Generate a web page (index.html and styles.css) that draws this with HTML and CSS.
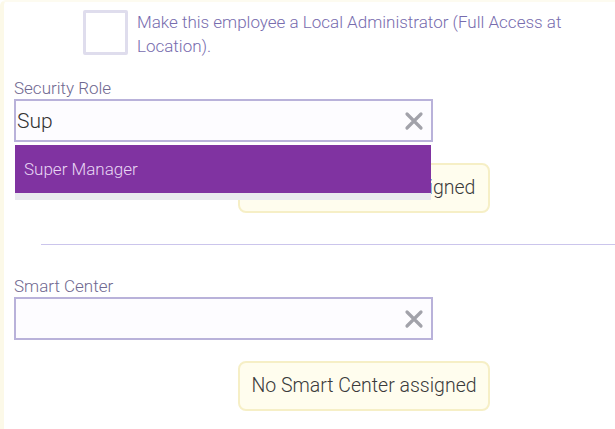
FILE: index.html
```html
<!DOCTYPE html>
<html lang="en">
<head>
  <meta charset="UTF-8">
  <meta name="viewport" content="width=device-width, initial-scale=1.0">
  <title>Employee Access</title>
  <link rel="stylesheet" href="styles.css">
</head>
<body>

<div class="panel">
  <div class="admin-row">
    <div class="checkbox"></div>
    <p class="admin-text">Make this employee a Local Administrator (Full Access at Location).</p>
  </div>

  <div class="field">
    <label class="field-label">Security Role</label>
    <div class="select-box">
      <input type="text" class="select-input" value="Sup">
      <svg class="clear" width="20" height="20" viewBox="0 0 20 20"><path d="M3 3 L17 17 M17 3 L3 17" stroke="#a2a2aa" stroke-width="3.2" stroke-linecap="round"/></svg>
      <ul class="dropdown">
        <li class="option active">Super Manager</li>
      </ul>
    </div>
    <div class="notice">No Security Role assigned</div>
  </div>

  <hr class="divider">

  <div class="field">
    <label class="field-label">Smart Center</label>
    <div class="select-box">
      <input type="text" class="select-input" value="">
      <svg class="clear" width="20" height="20" viewBox="0 0 20 20"><path d="M3 3 L17 17 M17 3 L3 17" stroke="#a2a2aa" stroke-width="3.2" stroke-linecap="round"/></svg>
    </div>
    <div class="notice">No Smart Center assigned</div>
  </div>
</div>

</body>
</html>
```

FILE: styles.css
```css
body {
  margin: 0;
  background-color: #ffffff;
  font-family: Roboto, "Noto Sans", sans-serif;
}
.panel {
  border-left: 4px solid #fcf9e8;
  border-top: 2px solid #fdfbf0;
  border-top-left-radius: 6px;
  padding: 8px 0 20px 10px;
  min-height: 400px;
}
.admin-row {
  display: flex;
  align-items: flex-start;
  padding-left: 69px;
}
.checkbox {
  width: 39px;
  height: 39px;
  border: 3px solid #dfdded;
  border-radius: 2px;
  flex-shrink: 0;
}
.admin-text {
  margin: 0 0 0 9px;
  padding-top: 0;
  font-size: 17px;
  font-weight: 300;
  line-height: 24px;
  color: #776cae;
  width: 450px;
}
.field {
  margin-top: 20px;
}
.field-label {
  display: block;
  font-size: 17px;
  font-weight: 300;
  line-height: 20px;
  color: #6f6890;
}
.select-box {
  position: relative;
  width: 415px;
  height: 39px;
  border: 2px solid #b9b2da;
  background-color: #fdfcff;
  margin-top: 1px;
}
.select-input {
  border: none;
  outline: none;
  background: transparent;
  font-family: Roboto, "Noto Sans", sans-serif;
  font-size: 21px;
  font-weight: 300;
  color: #333333;
  padding: 0 0 0 1px;
  height: 39px;
  width: 360px;
}
.clear {
  position: absolute;
  right: 7px;
  top: 10px;
}
.dropdown {
  position: absolute;
  left: -1px;
  top: 44px;
  width: 416px;
  margin: 0;
  padding: 0 0 7px 0;
  list-style: none;
  background-color: #e9e9ef;
  z-index: 2;
}
.option {
  height: 48px;
  line-height: 48px;
  padding-left: 9px;
  font-size: 17px;
  font-weight: 300;
  color: #e8d6f4;
}
.option.active {
  background-color: #8033a1;
}
.notice {
  margin: 21px 0 0 224px;
  width: 248px;
  height: 46px;
  line-height: 46px;
  border: 2px solid #f6efc6;
  border-radius: 8px;
  background-color: #fffdee;
  text-align: center;
  font-size: 19.5px;
  font-weight: 300;
  color: #3a3a3a;
}
.divider {
  margin: 31px 0 0 27px;
  border: none;
  border-top: 1px solid #cbc5ec;
}
.divider + .field {
  margin-top: 31px;
}
```
